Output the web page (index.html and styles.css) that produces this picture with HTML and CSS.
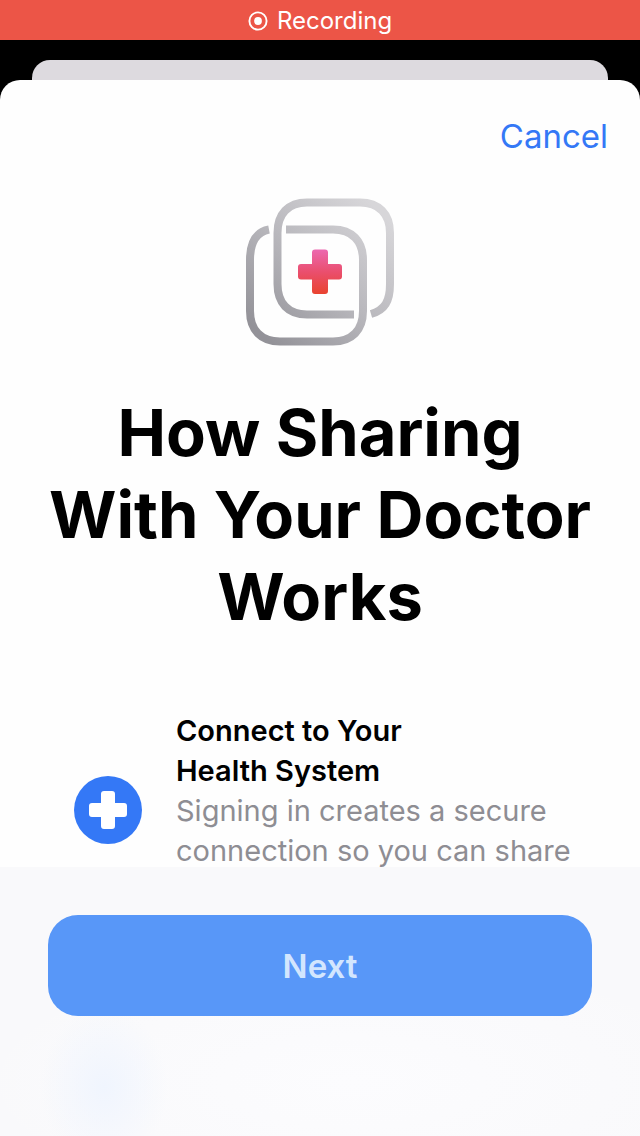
FILE: index.html
```html
<!DOCTYPE html>
<html lang="en">
<head>
<meta charset="utf-8">
<meta name="viewport" content="width=device-width, initial-scale=1">
<title>How Sharing With Your Doctor Works</title>
<link rel="stylesheet" href="styles.css">
</head>
<body>
<div class="screen">
  <div class="status-bar" role="status">
    <svg class="record-icon" viewBox="0 0 20 20" aria-hidden="true">
      <circle cx="10" cy="10" r="8.6" fill="none" stroke="currentColor" stroke-width="1.9"/>
      <circle cx="10" cy="10" r="3.9" fill="currentColor"/>
    </svg>
    <span>Recording</span>
  </div>
  <div class="sheet-behind"></div>
  <main class="sheet">
    <header class="sheet-nav">
      <button class="cancel" type="button">Cancel</button>
    </header>
    <div class="content">
      <svg class="hero-icon" viewBox="0 0 150 150" aria-hidden="true">
        <defs>
          <linearGradient id="frame" gradientUnits="userSpaceOnUse" x1="20" y1="140" x2="135" y2="15">
            <stop offset="0" stop-color="#939298"/>
            <stop offset="0.5" stop-color="#b9b8bd"/>
            <stop offset="1" stop-color="#d7d6d9"/>
          </linearGradient>
          <linearGradient id="cross" x1="0" y1="0" x2="0" y2="1">
            <stop offset="0" stop-color="#ec68b0"/>
            <stop offset="0.5" stop-color="#ea4f6e"/>
            <stop offset="1" stop-color="#e9432f"/>
          </linearGradient>
        </defs>
        <g fill="none" stroke="url(#frame)" stroke-width="8">
          <path d="M109 117.500H62C43 117.500 32.500 106 32.500 87V36C32.500 17 43 5.500 62 5.500H115C134 5.500 145 17 145 36V87C145 104 140 113 126 117"/>
          <path d="M24 32.500C11 35 5 46 5 63V114C5 133 16 144.500 35 144.500H88C107 144.500 118 133 118 114V63C118 44 107 32.500 88 32.500H41"/>
        </g>
        <path fill="url(#cross)" d="M70 52.500H80Q83 52.500 83 55.500V67H94Q97 67 97 70V79.500Q97 82.500 94 82.500H83V94Q83 97 80 97H70Q67 97 67 94V82.500H56Q53 82.500 53 79.500V70Q53 67 56 67H67V55.500Q67 52.500 70 52.500Z"/>
      </svg>
      <h1 class="title">How Sharing With Your Doctor Works</h1>
      <section class="feature">
        <svg class="feature-icon" viewBox="0 0 68 68" aria-hidden="true">
          <circle cx="34" cy="34" r="34" fill="#3478f6"/>
          <path fill="#fff" d="M30 15H38Q41 15 41 18V27H50Q53 27 53 30V38Q53 41 50 41H41V50Q41 53 38 53H30Q27 53 27 50V41H18Q15 41 15 38V30Q15 27 18 27H27V18Q27 15 30 15Z"/>
        </svg>
        <div class="feature-text">
          <h2 class="feature-title">Connect to Your <br>Health System</h2>
          <p class="feature-body">Signing in creates a secure connection so you can share</p>
        </div>
      </section>
    </div>
    <footer class="footer">
      <button class="next" type="button">Next</button>
    </footer>
  </main>
</div>
</body>
</html>
```
FILE: styles.css
```css
* {
  box-sizing: border-box;
}

body {
  margin: 0;
  background: #000;
  color: #000;
  font-family: Inter, "Liberation Sans", sans-serif;
}

h1, h2, p {
  margin: 0;
}

button {
  border: 0;
  padding: 0;
  font-family: inherit;
  cursor: pointer;
}

.screen {
  display: flex;
  flex-direction: column;
  min-height: 100vh;
}

.status-bar {
  display: flex;
  align-items: center;
  justify-content: center;
  gap: 9px;
  height: 40px;
  padding-top: 1px;
  background: #ec5547;
  color: #fff;
  font-size: 24px;
  line-height: 40px;
}

.record-icon {
  width: 20px;
  height: 20px;
}

.sheet-behind {
  height: 20px;
  margin: 20px 32px 0;
  border-radius: 18px 18px 0 0;
  background: #dddadf;
}

.sheet {
  display: flex;
  flex: 1;
  flex-direction: column;
  overflow: hidden;
  border-radius: 20px 20px 0 0;
  background: #fefefe;
}

.sheet-nav {
  display: flex;
  justify-content: flex-end;
  padding: 32px 32px 0;
}

.cancel {
  background: none;
  color: #3478f6;
  font-size: 33px;
  line-height: 48px;
}

.content {
  display: flex;
  flex: 1;
  flex-direction: column;
  align-items: center;
  padding: 37px 40px 0;
}

.hero-icon {
  width: 150px;
  height: 150px;
}

.title {
  margin-top: 45px;
  font-size: 65px;
  font-weight: 700;
  line-height: 82px;
  text-align: center;
}

.feature {
  display: flex;
  align-items: flex-end;
  align-self: stretch;
  gap: 34px;
  margin-top: 73px;
  padding-left: 34px;
}

.feature-icon {
  flex: none;
  width: 68px;
  height: 68px;
  margin-bottom: 27px;
}

.feature-title,
.feature-body {
  font-size: 29px;
  line-height: 40px;
}

.feature-title {
  font-weight: 600;
}

.feature-body {
  color: #8e8d93;
}

.footer {
  margin-top: -4px;
  padding: 48px 48px 120px;
  background:
    radial-gradient(ellipse 64px 80px at 104px 220px, #f0f5fe, transparent),
    radial-gradient(ellipse 60% 50% at 55% 80%, #fcfcfe, transparent),
    #f9f9fb;
}

.next {
  display: block;
  width: 100%;
  height: 101px;
  border-radius: 30px;
  background: #5897f8;
  color: #d3e6fe;
  font-size: 33px;
  font-weight: 600;
}
```
